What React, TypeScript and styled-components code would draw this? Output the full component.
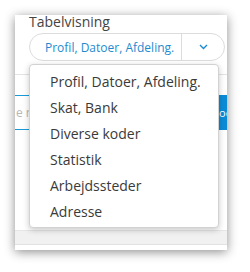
import React from "react";
import styled, { createGlobalStyle } from "styled-components";

const Global = createGlobalStyle`
  html, body { margin: 0; padding: 0; background: #ffffff; }
  body { font-family: "Open Sans", "Noto Sans", sans-serif; }
`;

const Stage = styled.div`
  width: 250px;
  height: 272px;
  padding: 15px 0 0 15px;
  box-sizing: border-box;
`;

const Panel = styled.div`
  position: relative;
  width: 212px;
  height: 235px;
  background: #ffffff;
  box-shadow: 0 2px 10px rgba(0, 0, 0, 0.45);
  display: flex;
  flex-direction: column;
`;

const Header = styled.div`
  padding: 0 2px 0 14px;
  display: flex;
  flex-direction: column;
  gap: 2px;
`;

const Label = styled.div`
  font-size: 14px;
  line-height: 19px;
  margin-top: -3px;
  color: #444444;
`;

const Select = styled.div`
  height: 28px;
  box-sizing: border-box;
  border: 1px solid #dcdcdc;
  border-radius: 14px;
  display: flex;
  align-items: stretch;
`;

const SelectValue = styled.div`
  flex: 1;
  display: flex;
  align-items: center;
  padding-left: 15px;
  font-size: 12px;
  color: #1e8bd0;
  border-right: 1px solid #dcdcdc;
`;

const SelectToggle = styled.div`
  width: 42px;
  display: flex;
  align-items: center;
  justify-content: center;
`;

const Rule = styled.div`
  margin-top: 13px;
  height: 1px;
  background: #e3e3e3;
`;

const SearchRow = styled.div`
  margin-top: 20px;
  height: 35px;
  display: flex;
  align-items: stretch;
  overflow: hidden;
`;

const SearchInput = styled.div`
  flex: 1;
  box-sizing: border-box;
  border-top: 1px solid #1a9ad6;
  border-bottom: 1px solid #1a9ad6;
  display: flex;
  align-items: center;
  padding-left: 1px;
  font-size: 12px;
  color: #b8b8b8;
  white-space: nowrap;
  overflow: hidden;
`;

const SearchButton = styled.div`
  flex: 0 0 28px;
  background: #0b8bd6;
  color: #ffffff;
  font-size: 11px;
  display: flex;
  align-items: center;
  padding-left: 2px;
  box-sizing: border-box;
  white-space: nowrap;
  overflow: hidden;
`;

const Spacer = styled.div`
  flex: 1;
`;

const FooterBand = styled.div`
  height: 13px;
  background: #f1f1f1;
  border-top: 1px solid #e6e6e6;
  border-bottom: 1px solid #e2e2e2;
`;

const FooterGap = styled.div`
  height: 5px;
`;

const Menu = styled.ul`
  position: absolute;
  left: 14px;
  top: 49px;
  width: 190px;
  height: 164px;
  box-sizing: border-box;
  margin: 0;
  padding: 3px 0;
  list-style: none;
  background: #ffffff;
  border: 1px solid #d2d2d2;
  border-radius: 4px;
  box-shadow: 0 2px 6px rgba(0, 0, 0, 0.22);
`;

const MenuItem = styled.li`
  height: 26px;
  display: flex;
  align-items: center;
  padding-left: 20px;
  font-size: 14px;
  color: #3a3a3a;
  white-space: nowrap;
`;

const items = [
  "Profil, Datoer, Afdeling.",
  "Skat, Bank",
  "Diverse koder",
  "Statistik",
  "Arbejdssteder",
  "Adresse",
];

export default function App() {
  return (
    <>
      <Global />
      <Stage>
        <Panel>
          <Header>
            <Label>Tabelvisning</Label>
            <Select>
              <SelectValue>Profil, Datoer, Afdeling.</SelectValue>
              <SelectToggle>
                <svg width="9" height="6" viewBox="0 0 9 6">
                  <polyline
                    points="1,1 4.5,4.5 8,1"
                    fill="none"
                    stroke="#1e8bd0"
                    strokeWidth="1.4"
                  />
                </svg>
              </SelectToggle>
            </Select>
          </Header>
          <Rule />
          <SearchRow>
            <SearchInput>e navn</SearchInput>
            <SearchButton>Datoer</SearchButton>
          </SearchRow>
          <Spacer />
          <FooterBand />
          <FooterGap />
          <Menu>
            {items.map((t) => (
              <MenuItem key={t}>{t}</MenuItem>
            ))}
          </Menu>
        </Panel>
      </Stage>
    </>
  );
}
